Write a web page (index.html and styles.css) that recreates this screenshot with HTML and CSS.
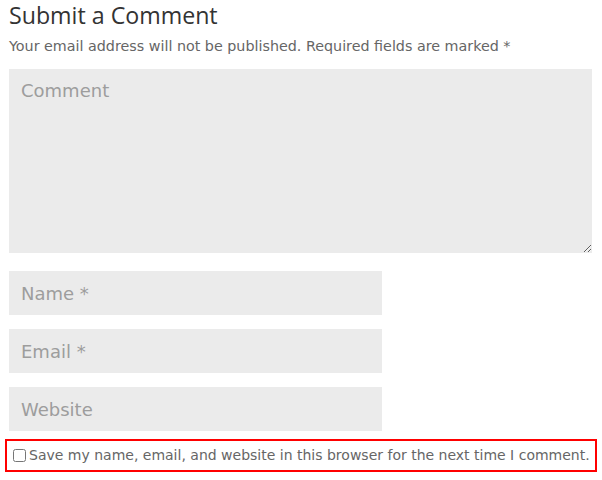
FILE: index.html
```html
<!DOCTYPE html>
<html>
<head>
<meta charset="utf-8">
<link rel="stylesheet" href="styles.css">
</head>
<body>
<div class="respond">
  <h3 class="title">Submit a Comment</h3>
  <p class="notes">Your email address will not be published. Required fields are marked <span class="req">*</span></p>
  <form class="form">
    <textarea class="field comment" placeholder="Comment"></textarea>
    <input class="field short" type="text" placeholder="Name *">
    <input class="field short" type="text" placeholder="Email *">
    <input class="field short" type="text" placeholder="Website">
    <label class="consent"><input type="checkbox" class="check"><span>Save my name, email, and website in this browser for the next time I comment.</span></label>
  </form>
</div>
</body>
</html>
```
FILE: styles.css
```css
html, body {
  margin: 0;
  padding: 0;
  background: #fff;
}
.respond {
  padding: 0 10px 0 9px;
  font-family: "DejaVu Sans", "Noto Sans", sans-serif;
}
.title {
  margin: 0;
  padding-top: 1px;
  font-family: "Open Sans", sans-serif;
  font-weight: 400;
  font-size: 23.2px;
  line-height: 28px;
  color: #333;
}
.notes {
  margin: 7px 0 0;
  font-size: 14.3px;
  line-height: 20px;
  color: #666;
}
.form {
  display: flex;
  flex-direction: column;
  align-items: flex-start;
  margin-top: 13px;
}
.field {
  box-sizing: border-box;
  border: none;
  background: #ebebeb;
  font-family: "DejaVu Sans", "Noto Sans", sans-serif;
  font-size: 18px;
  color: #666;
  padding: 0 12px;
  outline: none;
  margin: 0;
}
.field::placeholder {
  color: #9d9d9d;
}
.comment {
  width: 583px;
  height: 184px;
  padding: 11px 12px 10px;
  resize: vertical;
  display: block;
}
.short {
  width: 373px;
  height: 44px;
  margin-top: 18px;
}
.short + .short {
  margin-top: 14px;
}
.consent {
  box-sizing: border-box;
  align-self: stretch;
  margin: 8px -5px 0 -4px;
  border: 2px solid #f00;
  padding: 7px 4px 7px 4px;
  display: flex;
  align-items: center;
  font-size: 14px;
  line-height: 15px;
  color: #666;
  white-space: nowrap;
}
.check {
  margin: 0 3px 0 2px;
  width: 13px;
  height: 13px;
}
```
